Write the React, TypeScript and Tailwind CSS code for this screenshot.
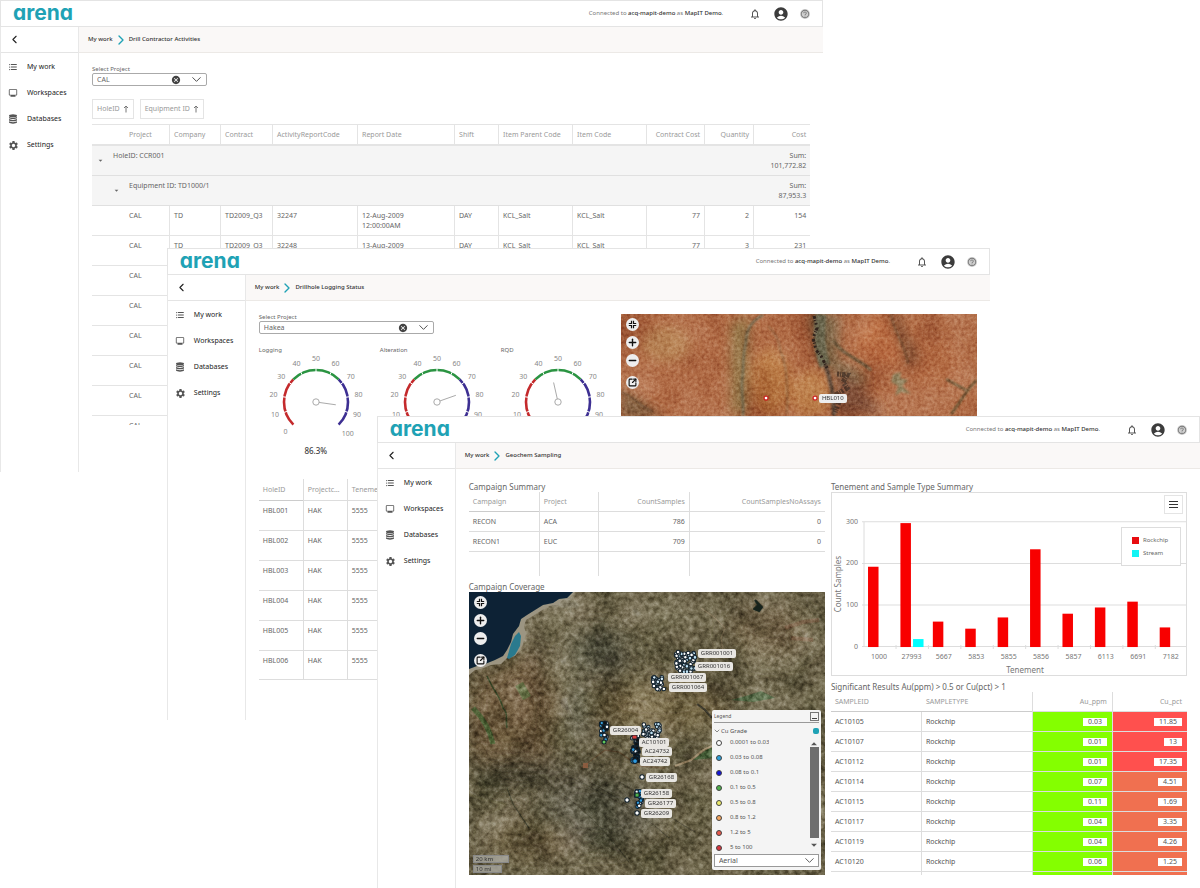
import type { ReactNode } from "react";
import {
  MdAccountCircle,
  MdArrowDropDown,
  MdArrowDropUp,
  MdCancel,
  MdFormatListBulleted,
  MdHelpOutline,
  MdNotificationsNone,
  MdOutlineMonitor,
  MdSettings,
} from "react-icons/md";
import { ChevronDown, ChevronLeft, ChevronRight, Minus, Plus, SquareArrowOutUpRight } from "lucide-react";

function DatabaseIcon() {
  return (
    <svg width="10" height="10" viewBox="0 0 10 10" fill="currentColor">
      <ellipse cx="5" cy="1.7" rx="4" ry="1.5" />
      <path d="M1 2.9C2 4 8 4 9 2.9V4.2C8 5.3 2 5.3 1 4.2Z" />
      <path d="M1 5.1C2 6.2 8 6.2 9 5.1V6.4C8 7.5 2 7.5 1 6.4Z" />
      <path d="M1 7.3C2 8.4 8 8.4 9 7.3V8.6C8 10 2 10 1 8.6Z" />
    </svg>
  );
}

const navItems = [
  { label: "My work", icon: <MdFormatListBulleted size={10} /> },
  { label: "Workspaces", icon: <MdOutlineMonitor size={10} /> },
  { label: "Databases", icon: <DatabaseIcon /> },
  { label: "Settings", icon: <MdSettings size={11} /> },
];

function AppWindow({ title, className, children }: { title: string; className: string; children: ReactNode }) {
  return (
    <section className={`isolate flex min-h-[472px] flex-col bg-white [grid-area:1/1] ${className}`}>
      <header className="flex h-[27px] items-center justify-between border border-[#e4e4e4] px-3">
        <a
          href="#"
          className="pb-0.5 font-['Inter',sans-serif] text-[21px] leading-6 font-bold text-[#1fa2b5] [font-feature-settings:'cv11']"
        >
          arena
        </a>
        <div className="flex items-center">
          <p className="mr-[26px] text-[6px] text-[#777]">
            Connected to <span className="font-medium text-[#333]">acq-mapit-demo</span> as{" "}
            <span className="font-medium text-[#333]">MapIT Demo</span>.
          </p>
          <button aria-label="Notifications" className="mr-3 text-[#555]">
            <MdNotificationsNone size={12} />
          </button>
          <button aria-label="Account" className="mr-[11px] text-[#3c3c3c]">
            <MdAccountCircle size={16} />
          </button>
          <button aria-label="Help" className="rounded-full bg-[#d0d0d0] text-[#777]">
            <MdHelpOutline size={10} />
          </button>
        </div>
      </header>

      <div className="flex flex-1">
        <aside className="w-[79px] shrink-0 border-x border-[#e8e8e8]">
          <div className="flex h-[26px] items-center border-b border-[#e4e4e4] pl-[7px]">
            <button aria-label="Collapse menu">
              <ChevronLeft size={13} className="text-[#222]" />
            </button>
          </div>
          <nav className="pt-px">
            {navItems.map((item) => (
              <a key={item.label} href="#" className="flex h-[26px] items-center pl-[7px] text-[7px] text-[#222]">
                <span className="flex w-[19px] text-[#555]">{item.icon}</span>
                {item.label}
              </a>
            ))}
          </nav>
        </aside>

        <div className="min-w-0 flex-1">
          <div className="flex h-[26px] items-center border-b border-[#ece9e6] bg-[#faf8f7] pl-[9px] text-[6px] font-medium text-[#333]">
            <a href="#">My work</a>
            <ChevronRight size={16} className="text-[#1fa2b5]" />
            <span>{title}</span>
          </div>
          <main className="px-[13px]">{children}</main>
        </div>
      </div>
    </section>
  );
}

function ProjectSelect({ id, value, className }: { id: string; value: string; className: string }) {
  return (
    <div className={className}>
      <label htmlFor={id} className="block text-[6px] leading-[7px] text-[#666]">
        Select Project
      </label>
      <div className="relative">
        <select
          id={id}
          defaultValue={value}
          className="block h-[13px] w-full appearance-none rounded-xs border border-[#aaa] bg-white pl-1 text-[7px] leading-[11px] text-[#666]"
        >
          <option>{value}</option>
        </select>
        <button aria-label="Clear" className="absolute top-[2px] right-[26px] text-[#444]">
          <MdCancel size={10} />
        </button>
        <ChevronDown
          size={15}
          strokeWidth={1.5}
          className="pointer-events-none absolute -top-px right-[3px] text-[#444]"
        />
      </div>
    </div>
  );
}

/* ---------- Drill Contractor Activities ---------- */

const activityColumns = [
  { name: "Project", width: "w-[77px]" },
  { name: "Company", width: "w-[51px]" },
  { name: "Contract", width: "w-[52px]" },
  { name: "ActivityReportCode", width: "w-[85px]" },
  { name: "Report Date", width: "w-[97px]" },
  { name: "Shift", width: "w-[44px]" },
  { name: "Item Parent Code", width: "w-[74px]" },
  { name: "Item Code", width: "w-[74px]" },
  { name: "Contract Cost", width: "w-[58px]" },
  { name: "Quantity", width: "w-[49px]" },
  { name: "Cost", width: "w-[57px]" },
];

const activities = [12, 13, 14, 15, 16, 17, 18, 19].map((day, i) => [
  "CAL",
  "TD",
  "TD2009_Q3",
  String(32247 + i),
  `${day}-Aug-2009 12:00:00AM`,
  "DAY",
  "KCL_Salt",
  "KCL_Salt",
  "77",
  String(2 + i),
  String(77 * (2 + i)),
]);

function activityCell(i: number) {
  if (i === 0) return "pl-[37px]";
  if (i === 4) return "pl-1 pr-10 border-l";
  if (i > 7) return "pr-1 text-right border-l";
  return "pl-1 border-l";
}

function SortArrow() {
  return (
    <svg width="6" height="8" viewBox="0 0 6 8" fill="none" stroke="#777">
      <path d="M3 7.5V1M1 3L3 1L5 3" />
    </svg>
  );
}

function ContractorActivities() {
  return (
    <div className="pt-[13px]">
      <ProjectSelect id="project-cal" value="CAL" className="w-[115px]" />
      <div className="mt-[13px] flex gap-[6px] text-[7px] text-[#999]">
        <button className="flex h-5 items-center gap-[3px] border border-[#e4e4e4] px-1">
          HoleID <SortArrow />
        </button>
        <button className="flex h-5 items-center gap-[3px] border border-[#e4e4e4] px-1">
          Equipment ID <SortArrow />
        </button>
      </div>
      <div className="mt-[5px] h-[301px] overflow-hidden border-t border-[#e4e4e4]">
        <table className="w-full table-fixed border-separate border-spacing-0 text-[7px] leading-[10px] text-[#666]">
          <thead>
            <tr className="h-[21px] text-[#999]">
              {activityColumns.map((col, i) => (
                <th
                  key={col.name}
                  className={`border-b-2 border-[#e4e4e4] font-normal whitespace-nowrap ${col.width} ${i > 7 ? "text-right" : "text-left"} ${i === 4 ? "border-l pl-1" : activityCell(i)}`}
                >
                  {col.name}
                </th>
              ))}
            </tr>
          </thead>
          <tbody>
            <tr className="h-[30px] bg-[#f5f5f5] align-top">
              <td colSpan={10} className="border-b border-[#e0e0e0] pt-[5px]">
                <button className="flex items-start gap-2 pl-1">
                  <MdArrowDropDown size={9} className="mt-[5px]" /> HoleID: CCR001
                </button>
              </td>
              <td className="border-b border-[#e0e0e0] pt-[5px] pr-1 text-right">
                Sum:
                <br />
                101,772.82
              </td>
            </tr>
            <tr className="h-[30px] bg-[#f5f5f5] align-top">
              <td colSpan={10} className="border-b border-[#e0e0e0] pt-[5px]">
                <button className="flex items-start gap-2 pl-5">
                  <MdArrowDropDown size={9} className="mt-[5px]" /> Equipment ID: TD1000/1
                </button>
              </td>
              <td className="border-b border-[#e0e0e0] pt-[5px] pr-1 text-right">
                Sum:
                <br />
                87,953.3
              </td>
            </tr>
            {activities.map((row) => (
              <tr key={row[3]} className="h-[30px] align-top">
                {row.map((value, i) => (
                  <td key={i} className={`border-b border-[#e4e4e4] pt-[5px] ${activityCell(i)}`}>
                    {value}
                  </td>
                ))}
              </tr>
            ))}
          </tbody>
        </table>
      </div>
    </div>
  );
}

/* ---------- Drillhole Logging Status ---------- */

function polar(value: number, radius: number) {
  const angle = ((value / 100) * 270 - 135) * (Math.PI / 180);
  return { x: 57 + radius * Math.sin(angle), y: 47 - radius * Math.cos(angle) };
}

function arc(from: number, to: number) {
  const a = polar(from, 32);
  const b = polar(to, 32);
  return `M${a.x} ${a.y}A32 32 0 0 1 ${b.x} ${b.y}`;
}

const ticks = [0, 10, 20, 30, 40, 50, 60, 70, 80, 90, 100];

function Gauge({ label, value }: { label: string; value: number }) {
  const from = polar(value, 3);
  const to = polar(value, 20);
  return (
    <figure className="w-[121px] shrink-0">
      <figcaption className="text-[6px] leading-[9px] text-[#666]">{label}</figcaption>
      <svg width="114" height="90" viewBox="0 0 114 90" fill="none" strokeWidth="2.6">
        <path d={arc(0, 33.3)} stroke="#c42a2c" />
        <path d={arc(33.3, 66.7)} stroke="#2b9442" />
        <path d={arc(66.7, 100)} stroke="#3d2f92" />
        {ticks.slice(1, 10).map((t) => {
          const a = polar(t, 30);
          const b = polar(t, 34);
          return <line key={t} x1={a.x} y1={a.y} x2={b.x} y2={b.y} stroke="#fff" strokeWidth="1" />;
        })}
        {ticks.map((t) => {
          const p = polar(t, t === 100 ? 45 : 43);
          return (
            <text key={t} x={p.x} y={p.y + 2} textAnchor="middle" fontSize="7" fill="#888">
              {t}
            </text>
          );
        })}
        <circle cx="57" cy="47" r="3.2" stroke="#aaa" strokeWidth="1" />
        <line x1={from.x} y1={from.y} x2={to.x} y2={to.y} stroke="#aaa" strokeWidth="1" />
      </svg>
      <p className="w-[114px] text-center text-[8px] leading-3 font-medium text-[#444]">{value}%</p>
    </figure>
  );
}

function MapControls() {
  const button = "flex size-[13px] items-center justify-center rounded-full bg-[#eee] text-[#111]";
  return (
    <div className="absolute top-1 left-[5px] flex flex-col gap-[5px]">
      <button aria-label="Zoom to extent" className={button}>
        <svg width="9" height="9" viewBox="0 0 9 9" fill="none" stroke="currentColor" strokeWidth="1.2">
          <path d="M3.5 .8V3.5H.8M5.5 .8V3.5H8.2M3.5 8.2V5.5H.8M5.5 8.2V5.5H8.2" />
        </svg>
      </button>
      <button aria-label="Zoom in" className={button}>
        <Plus size={11} strokeWidth={3} />
      </button>
      <button aria-label="Zoom out" className={button}>
        <Minus size={11} strokeWidth={3} />
      </button>
      <button aria-label="Open map in new window" className={`mt-1 ${button}`}>
        <SquareArrowOutUpRight size={9} strokeWidth={3} />
      </button>
    </div>
  );
}

function DesertImagery() {
  return (
    <svg className="absolute inset-0 size-full" viewBox="0 0 356 283" preserveAspectRatio="xMinYMin slice">
      <defs>
        <filter id="sand" x="0" y="0" width="100%" height="100%" colorInterpolationFilters="sRGB">
          <feTurbulence type="fractalNoise" baseFrequency="0.3" numOctaves="4" seed="4" />
          <feColorMatrix values="1 0 0 0 0  1 0 0 0 0  1 0 0 0 0  0 0 0 0 1" />
        </filter>
        <filter id="dunes" x="0" y="0" width="100%" height="100%" colorInterpolationFilters="sRGB">
          <feTurbulence type="fractalNoise" baseFrequency="0.025 0.018" numOctaves="3" seed="9" />
          <feColorMatrix values="1.6 0 0 0 -0.3  1.6 0 0 0 -0.3  1.6 0 0 0 -0.3  0 0 0 0 1" />
        </filter>
        <filter id="soft" x="-20%" y="-20%" width="140%" height="140%">
          <feGaussianBlur stdDeviation="6" />
        </filter>
        <filter id="softer">
          <feGaussianBlur stdDeviation="0.8" />
        </filter>
      </defs>
      <rect width="356" height="283" fill="#b06b45" />
      <g filter="url(#soft)">
        <ellipse cx="45" cy="30" rx="24" ry="18" fill="#b98557" />
        <ellipse cx="150" cy="68" rx="20" ry="34" fill="#bd7f4a" />
        <ellipse cx="190" cy="80" rx="20" ry="24" fill="#bd804b" />
        <ellipse cx="265" cy="26" rx="30" ry="24" fill="#bf7548" />
        <ellipse cx="315" cy="50" rx="26" ry="24" fill="#b26a42" />
        <path d="M110 10L128 0L126 100L110 100Z" fill="#977a4c" />
        <path d="M188 0L218 0L216 45L246 62L240 74L200 50Z" fill="#775e3f" />
        <path d="M268 0L278 0L298 45L288 54Z" fill="#85573a" />
        <path d="M0 74L44 104L0 104Z" fill="#7c5a3b" />
        <path d="M212 60L236 66L262 100L216 100Z" fill="#7b4a33" />
      </g>
      <rect width="356" height="283" filter="url(#dunes)" className="opacity-40 mix-blend-soft-light" />
      <g fill="none" filter="url(#softer)">
        <path d="M142 1C132 6 125 14 125 28C121 42 123 54 121 66C120 80 123 90 122 102" stroke="#706b52" strokeWidth="2" />
        <path d="M147 12C153 18 158 24 159 36C165 48 167 64 166 100" stroke="#7e5c3c" strokeWidth="1" />
        <path d="M200 0C197 22 199 38 204 52" stroke="#6b664e" strokeWidth="11" />
        <path d="M204 50C210 66 213 82 213 102" stroke="#5e4a3a" strokeWidth="4" />
        <path d="M212 26C220 40 236 44 250 56" stroke="#69563a" strokeWidth="3" />
        <path d="M270 0C272 18 284 28 287 50" stroke="#5c4630" strokeWidth="1" />
        <path d="M325 65L345 76M356 66C346 74 340 88 330 100" stroke="#5c5030" strokeWidth="2" />
        <path d="M0 78C12 82 18 92 32 98" stroke="#5a432c" strokeWidth="1" />
        <path d="M272 60L280 58L279 64L287 66L281 72L290 80L280 78L274 82L277 72L270 68Z" fill="#93835f" />
      </g>
      <rect width="356" height="283" filter="url(#sand)" className="opacity-60 mix-blend-soft-light" />
      <g fill="none" stroke="#30231c">
        <path d="M193 2L196 14L192 24L195 36L200 42L206 54" strokeWidth="3" strokeDasharray="3 1 1 2 2 3" />
        <path d="M216 60L226 61L222 68L226 74L216 80L218 88L214 98" strokeWidth="5" strokeDasharray="2 1 1 1 3 2" opacity=".6" />
      </g>
      <g fill="#fff" stroke="#c22" strokeWidth="1.2">
        <circle cx="145" cy="84" r="2" />
        <circle cx="194" cy="84" r="2" />
      </g>
    </svg>
  );
}

const holes = ["HBL001", "HBL002", "HBL003", "HBL004", "HBL005", "HBL006"];

function LoggingStatus() {
  return (
    <div className="grid grid-cols-2 gap-[6px] pt-[13px]">
      <div className="min-w-0">
        <ProjectSelect id="project-hakea" value="Hakea" className="w-[175px]" />
        <div className="mt-3 flex">
          <Gauge label="Logging" value={86.3} />
          <Gauge label="Alteration" value={76.1} />
          <Gauge label="RQD" value={45.3} />
        </div>
        <div className="mt-[22px] h-[201px] overflow-hidden border-b border-[#ddd]">
          <table className="w-full table-fixed border-separate border-spacing-0 text-left text-[7px] leading-[10px] text-[#666]">
            <thead>
              <tr className="h-[22px] text-[#999]">
                <th className="w-[44px] border-b border-[#ccc] pl-1 font-normal">HoleID</th>
                <th className="w-[44px] truncate border-b border-l border-[#ddd] px-1 font-normal">Projectcode</th>
                <th className="border-b border-l border-[#ddd] pl-1 font-normal">Tenement</th>
              </tr>
            </thead>
            <tbody>
              {holes.map((hole) => (
                <tr key={hole} className="h-[30px] align-top">
                  <td className="border-b border-[#ddd] pt-[5px] pl-1">{hole}</td>
                  <td className="border-b border-l border-[#ddd] pt-[5px] pl-1">HAK</td>
                  <td className="border-b border-l border-[#ddd] pt-[5px] pl-1">5555</td>
                </tr>
              ))}
            </tbody>
          </table>
        </div>
      </div>
      <div className="relative isolate h-[283px] overflow-hidden">
        <DesertImagery />
        <MapControls />
        <span className="absolute top-20 left-[198px] rounded-xs bg-[#eee] px-[3px] text-[6px] leading-[9px] text-[#333]">
          HBL010
        </span>
      </div>
    </div>
  );
}

/* ---------- Geochem Sampling ---------- */

const mapLabels = [
  { text: "GRR001001", x: 229, y: 57 },
  { text: "GRR001016", x: 226, y: 70 },
  { text: "GRR001067", x: 199, y: 81 },
  { text: "GRR001064", x: 200, y: 91 },
  { text: "GR26004", x: 141, y: 134 },
  { text: "AC10101", x: 170, y: 146 },
  { text: "AC24732", x: 173, y: 155 },
  { text: "AC24742", x: 171, y: 165 },
  { text: "GR26168", x: 177, y: 181 },
  { text: "GR26158", x: 172, y: 197 },
  { text: "GR26177", x: 176, y: 207 },
  { text: "GR26209", x: 172, y: 217 },
];

const clusters = [
  { x: 207, y: 60, w: 19, h: 20, n: 70, colors: ["#fff", "#fff", "#bfe3f5"] },
  { x: 183, y: 85, w: 12, h: 13, n: 30, colors: ["#fff", "#d6eefa"] },
  { x: 132, y: 130, w: 6, h: 18, n: 30, colors: ["#111", "#fff", "#3a9fd8"] },
  { x: 174, y: 132, w: 17, h: 14, n: 44, colors: ["#fff", "#bfe3f5", "#fff"] },
  { x: 163, y: 144, w: 7, h: 26, n: 40, colors: ["#111", "#fff", "#2f9be0", "#111"] },
  { x: 167, y: 195, w: 4, h: 12, n: 12, colors: ["#2f9be0", "#fff", "#2f9be0"] },
  { x: 168, y: 206, w: 6, h: 9, n: 10, colors: ["#fff", "#2f9be0"] },
];

function noise(n: number) {
  const v = Math.sin(n * 12.9898) * 43758.5453;
  return v - Math.floor(v);
}

function scatter(index: number) {
  const c = clusters[index];
  return Array.from({ length: c.n }, (_, i) => ({
    x: c.x + noise(i * 2 + index * 31 + 1) * c.w,
    y: c.y + noise(i * 2 + index * 31 + 2) * c.h,
    fill: c.colors[i % c.colors.length],
  }));
}

function CoastImagery() {
  return (
    <svg className="absolute inset-0 size-full" viewBox="0 0 356 283" preserveAspectRatio="xMinYMin slice">
      <defs>
        <filter id="scrub" x="0" y="0" width="100%" height="100%" colorInterpolationFilters="sRGB">
          <feTurbulence type="fractalNoise" baseFrequency="0.2" numOctaves="5" seed="21" />
          <feColorMatrix values="1.2 0 0 0 -0.1  1.2 0 0 0 -0.1  1.2 0 0 0 -0.1  0 0 0 0 1" />
        </filter>
        <filter id="ridges" x="0" y="0" width="100%" height="100%" colorInterpolationFilters="sRGB">
          <feTurbulence type="fractalNoise" baseFrequency="0.025" numOctaves="6" seed="6" />
          <feColorMatrix values="1.8 0 0 0 -0.4  1.7 .1 0 0 -0.4  1.7 0 0 0 -0.4  0 0 0 0 1" />
        </filter>
        <filter id="haze" x="-20%" y="-20%" width="140%" height="140%">
          <feGaussianBlur stdDeviation="10" />
        </filter>
        <filter id="edge">
          <feGaussianBlur stdDeviation="0.7" />
        </filter>
      </defs>
      <rect width="356" height="283" fill="#6b634b" />
      <g filter="url(#haze)">
        <path d="M0 90L60 60L90 100L80 170L20 180L0 160Z" fill="#715d42" />
        <ellipse cx="130" cy="60" rx="30" ry="22" fill="#605d4e" />
        <ellipse cx="60" cy="180" rx="60" ry="16" fill="#4f4a38" />
        <ellipse cx="190" cy="115" rx="70" ry="26" fill="#76684a" />
        <ellipse cx="300" cy="40" rx="40" ry="26" fill="#716249" />
        <ellipse cx="110" cy="120" rx="14" ry="30" fill="#575542" />
        <ellipse cx="130" cy="220" rx="60" ry="36" fill="#585445" />
        <ellipse cx="60" cy="250" rx="40" ry="20" fill="#726548" />
      </g>
      <g filter="url(#edge)" fill="none">
        <path d="M4 116C12 124 20 134 24 152" stroke="#4b5f36" strokeWidth="5" />
        <path d="M50 92L58 106" stroke="#5d6a40" strokeWidth="9" />
        <path d="M18 84C24 98 32 106 34 116C40 122 36 128 38 136" stroke="#3b4a2c" strokeWidth="1.5" />
        <path d="M262 108L280 103L292 99L306 106L284 110Z" fill="#4c6040" />
        <path d="M224 168L240 156L250 154L254 165Z" fill="#46603a" />
        <path d="M206 174L222 168L234 158L250 151" stroke="#a9977b" strokeWidth="2" />
        <path d="M196 176L170 174L150 160L136 158L112 176" stroke="#645037" strokeWidth="1.2" />
        <path d="M228 112L236 118L243 126" stroke="#37342a" strokeWidth="2" />
        <path d="M232 16L246 26L256 36L252 46L254 60" stroke="#83755c" strokeWidth="1.2" />
        <path d="M316 36L334 30L350 28M322 46L344 48" stroke="#704c38" strokeWidth="4" opacity=".5" />
        <path d="M38 196L44 212L52 224L60 236" stroke="#3b3b2a" strokeWidth="1.2" />
        <path d="M96 184C120 192 140 206 170 222M120 190C150 206 170 220 200 246M90 200C120 220 140 244 160 270M150 190C180 206 190 220 226 240" stroke="#403c30" strokeWidth=".8" />
      </g>
      <rect width="356" height="283" filter="url(#ridges)" className="opacity-50 mix-blend-soft-light" />
      <rect width="356" height="283" filter="url(#scrub)" className="opacity-80 mix-blend-soft-light" />
      <path d="M286 8L289 13L285 17L290 19L293 15Z" fill="#16231c" stroke="#16231c" strokeWidth="2" filter="url(#edge)" />
      <path
        d="M0 83V0H106L101 6L94 8L88 13L80 14L70 20L62 25L57 28L55 34L57 42L54 52L51 58L46 64L38 66L32 72L22 73L12 77L6 78Z"
        fill="#9c9582"
        filter="url(#edge)"
      />
      <path
        d="M0 77V0H104L98 6L90 7L84 11L74 13L66 18L58 23L52 27L50 34L44 42L42 50L38 58L34 64L26 68L16 72L8 74Z"
        fill="#0a2335"
        filter="url(#edge)"
      />
      <path d="M50 40L52 44L51 54L46 63L40 67L38 66L42 52L46 44Z" fill="#2c7a8e" filter="url(#edge)" />
      <path d="M114 171h5v5h-5z" fill="#9a6144" opacity=".8" />
      <g stroke="#10202c" strokeWidth="1">
        {clusters.map((_, i) =>
          scatter(i).map((dot, j) => <circle key={`${i}-${j}`} cx={dot.x} cy={dot.y} r="1.8" fill={dot.fill} />),
        )}
        <rect x="163" y="143" width="5" height="4" fill="#d83a3a" />
        <circle cx="135" cy="150" r="2" fill="#5fc75a" />
        <circle cx="166" cy="169" r="2.4" fill="#2f9be0" />
        <rect x="166" y="201" width="4" height="4" fill="#4fb54a" />
        <circle cx="173" cy="185" r="2.2" fill="#fff" />
        <circle cx="158" cy="208" r="2.2" fill="#fff" />
        <circle cx="168" cy="221" r="2.2" fill="#fff" />
      </g>
    </svg>
  );
}

const grades = [
  { range: "0.0001 to 0.03", color: "bg-white" },
  { range: "0.03 to 0.08", color: "bg-[#2f9fd8]" },
  { range: "0.08 to 0.1", color: "bg-[#1414d8]" },
  { range: "0.1 to 0.5", color: "bg-[#4fae4a]" },
  { range: "0.5 to 0.8", color: "bg-[#ecea6a]" },
  { range: "0.8 to 1.2", color: "bg-[#f2a45e]" },
  { range: "1.2 to 5", color: "bg-[#e8584a]" },
  { range: "5 to 100", color: "bg-[#d8363f]" },
];

function MapLegend() {
  return (
    <div className="absolute right-1 bottom-[5px] w-[109px] rounded-xs bg-[#f4f4f4] px-[2px] py-px text-[6px] text-[#555]">
      <div className="flex h-3 items-center justify-between border-b border-[#999]">
        <span className="text-[5px]">Legend</span>
        <button aria-label="Minimise legend" className="flex size-[9px] items-end justify-center border border-[#777] pb-px">
          <span className="h-px w-[5px] bg-[#444]" />
        </button>
      </div>
      <div className="flex h-4 items-center">
        <ChevronDown size={8} className="-ml-px" /> Cu Grade
        <span className="ml-auto size-[6px] rounded-xs bg-[#1fa2b5]" />
      </div>
      <div className="flex h-[113px] justify-between">
        <ul className="-mt-1 h-[117px] overflow-hidden">
          {grades.map((grade) => (
            <li key={grade.range} className="flex h-[15px] items-center gap-2 pl-[2px]">
              <span className={`size-[6px] rounded-full border border-[#444] ${grade.color}`} />
              {grade.range}
            </li>
          ))}
        </ul>
        <div className="flex w-[9px] flex-col items-center justify-between">
          <MdArrowDropUp size={14} className="-mt-[2px] -mb-[4px] shrink-0" />
          <div className="w-full flex-1 bg-[#6e6e6e]" />
          <MdArrowDropDown size={14} className="shrink-0" />
        </div>
      </div>
      <div className="relative my-[2px]">
        <select
          aria-label="Base layer"
          className="block h-[13px] w-full appearance-none border border-[#999] bg-white pl-1 text-[7px] leading-[11px] text-[#555]"
        >
          <option>Aerial</option>
        </select>
        <ChevronDown size={15} strokeWidth={1.5} className="pointer-events-none absolute -top-px right-0.5" />
      </div>
    </div>
  );
}

const bars = [
  { tenement: "1000", rockchip: 192 },
  { tenement: "27993", rockchip: 297, stream: 18 },
  { tenement: "5667", rockchip: 60 },
  { tenement: "5853", rockchip: 43 },
  { tenement: "5855", rockchip: 70 },
  { tenement: "5856", rockchip: 234 },
  { tenement: "5857", rockchip: 79 },
  { tenement: "6113", rockchip: 94 },
  { tenement: "6691", rockchip: 108 },
  { tenement: "7182", rockchip: 46 },
];

const plotY = (value: number) => 153.5 - value * 0.4155;

function TenementChart() {
  return (
    <div className="relative border border-[#ddd]">
      <svg className="block w-full" viewBox="0 0 354 182" fontSize="7" fill="#777">
        {[0, 100, 200, 300].map((value) => (
          <g key={value}>
            <line x1="30" x2="354" y1={plotY(value)} y2={plotY(value)} stroke="#ddd" />
            <text x="26" y={plotY(value) + 2} textAnchor="end">
              {value}
            </text>
          </g>
        ))}
        <line x1="32" x2="32" y1="29" y2="154" stroke="#ddd" />
        {bars.map((bar, i) => {
          const x = 36 + i * 32.4;
          return (
            <g key={bar.tenement}>
              <rect x={x} y={plotY(bar.rockchip)} width="10.5" height={154 - plotY(bar.rockchip)} fill="#f80000" />
              {bar.stream && (
                <rect x={x + 12.6} y={plotY(bar.stream)} width="10.5" height={154 - plotY(bar.stream)} fill="#0ff" />
              )}
              <text x={x + 11} y="166" textAnchor="middle">
                {bar.tenement}
              </text>
              <line x1={x + 28} x2={x + 28} y1="152" y2="156" stroke="#ddd" />
            </g>
          );
        })}
        <text x="193" y="180" textAnchor="middle" fontSize="8">
          Tenement
        </text>
        <text transform="translate(9 91) rotate(-90)" textAnchor="middle" fontSize="8">
          Count Samples
        </text>
      </svg>
      <button
        aria-label="Chart menu"
        className="absolute top-[2px] right-[3px] flex size-[19px] flex-col items-center justify-center gap-[2px] border border-[#e4e4e4] bg-white"
      >
        <span className="h-px w-[9px] bg-[#333]" />
        <span className="h-px w-[9px] bg-[#333]" />
        <span className="h-px w-[9px] bg-[#333]" />
      </button>
      <ul className="absolute top-[34px] right-[5px] flex h-[39px] w-[60px] flex-col justify-center gap-[3px] border border-[#ddd] bg-white pl-[10px] text-[6px] leading-[10px] text-[#666]">
        <li className="flex items-center gap-1">
          <span className="size-[7px] bg-[#e80c10]" /> Rockchip
        </li>
        <li className="flex items-center gap-1">
          <span className="size-[7px] bg-[#12f4f4]" /> Stream
        </li>
      </ul>
    </div>
  );
}

const results = [
  { id: "AC10105", au: "0.03", cu: "11.85", high: true },
  { id: "AC10107", au: "0.01", cu: "13", high: true },
  { id: "AC10112", au: "0.01", cu: "17.35", high: true },
  { id: "AC10114", au: "0.07", cu: "4.51", high: false },
  { id: "AC10115", au: "0.11", cu: "1.69", high: false },
  { id: "AC10117", au: "0.04", cu: "3.35", high: false },
  { id: "AC10119", au: "0.04", cu: "4.26", high: false },
  { id: "AC10120", au: "0.06", cu: "1.25", high: false },
];

function GeochemSampling() {
  const heading = "text-[8px] leading-[11px] text-[#666]";
  return (
    <div className="grid grid-cols-2 gap-[6px] pt-3 pb-[13px]">
      <div className="min-w-0">
        <h2 className={heading}>Campaign Summary</h2>
        <table className="w-full table-fixed border-separate border-spacing-0 text-left text-[7px] leading-[10px] text-[#666]">
          <thead>
            <tr className="h-5 text-[#999]">
              <th className="w-[70px] border-b border-[#ccc] pl-1 font-normal">Campaign</th>
              <th className="w-[59px] border-b border-l border-[#ddd] pl-1 font-normal">Project</th>
              <th className="w-[91px] border-b border-l border-[#ddd] pr-1 text-right font-normal">CountSamples</th>
              <th className="border-b border-l border-[#ddd] pr-1 text-right font-normal">CountSamplesNoAssays</th>
            </tr>
          </thead>
          <tbody>
            <tr className="h-5">
              <td className="border-b border-[#ddd] pl-1">RECON</td>
              <td className="border-b border-l border-[#ddd] pl-1">ACA</td>
              <td className="border-b border-l border-[#ddd] pr-1 text-right">786</td>
              <td className="border-b border-l border-[#ddd] pr-1 text-right">0</td>
            </tr>
            <tr className="h-5">
              <td className="border-b border-[#ddd] pl-1">RECON1</td>
              <td className="border-b border-l border-[#ddd] pl-1">EUC</td>
              <td className="border-b border-l border-[#ddd] pr-1 text-right">709</td>
              <td className="border-b border-l border-[#ddd] pr-1 text-right">0</td>
            </tr>
            <tr className="h-6">
              <td />
              <td className="border-l border-[#ddd]" />
              <td className="border-l border-[#ddd]" />
              <td className="border-l border-[#ddd]" />
            </tr>
          </tbody>
        </table>
        <h2 className={`mt-[5px] ${heading}`}>Campaign Coverage</h2>
        <div className="relative isolate h-[283px] overflow-hidden">
          <CoastImagery />
          <MapControls />
          {mapLabels.map((label) => (
            <span
              key={label.text}
              className="absolute rounded-xs bg-[#e8e6e2] px-[3px] text-[6px] leading-[9px] text-[#333]"
              style={{ left: label.x, top: label.y }}
            >
              {label.text}
            </span>
          ))}
          <div className="absolute bottom-[2px] left-1 flex flex-col items-start gap-[2px] text-[6px] leading-[6px] text-[#333]">
            <span className="w-9 border border-[#888] bg-[#aaa9a0]/80 pl-[2px]">20 km</span>
            <span className="w-[29px] border border-[#888] bg-[#aaa9a0]/80 pl-[2px]">10 mi</span>
          </div>
          <MapLegend />
        </div>
      </div>

      <div className="min-w-0">
        <h2 className={heading}>Tenement and Sample Type Summary</h2>
        <TenementChart />
        <h2 className={`mt-[5px] ${heading}`}>Significant Results Au(ppm) &gt; 0.5 or Cu(pct) &gt; 1</h2>
        <table className="w-full table-fixed border-separate border-spacing-0 text-left text-[7px] leading-[8px] text-[#555]">
          <thead>
            <tr className="h-5 text-[#999]">
              <th className="w-[90px] border-b border-[#ccc] pl-1 font-normal">SAMPLEID</th>
              <th className="w-[111px] border-b border-[#ccc] pl-[5px] font-normal">SAMPLETYPE</th>
              <th className="w-[80px] border-b border-l border-[#ddd] pr-[5px] text-right font-normal">Au_ppm</th>
              <th className="border-b border-l border-[#ddd] pr-[5px] text-right font-normal">Cu_pct</th>
            </tr>
          </thead>
          <tbody>
            {results.map((row) => (
              <tr key={row.id} className="h-5">
                <td className="border-b border-[#ddd] pl-1">{row.id}</td>
                <td className="border-b border-l border-[#ddd] pl-1">Rockchip</td>
                <td className="border-b border-l border-[#ddd] bg-[#84ff00] pr-[5px] text-right">
                  <span className="inline-block bg-white px-[5px]">{row.au}</span>
                </td>
                <td
                  className={`border-b border-l border-[#ddd] pr-[5px] text-right ${row.high ? "bg-[#ff504e]" : "bg-[#f07050]"}`}
                >
                  <span className="inline-block bg-white px-[5px]">{row.cu}</span>
                </td>
              </tr>
            ))}
            <tr className="h-[3px]">
              <td />
              <td className="border-l border-[#ddd]" />
              <td className="border-l border-[#ddd] bg-[#84ff00]" />
              <td className="border-l border-[#ddd] bg-[#f07050]" />
            </tr>
          </tbody>
        </table>
      </div>
    </div>
  );
}

export default function App() {
  return (
    <div className="grid min-h-screen items-start bg-white font-['Noto_Sans',sans-serif]">
      <AppWindow title="Drill Contractor Activities" className="mr-[31.4%]">
        <ContractorActivities />
      </AppWindow>
      <AppWindow title="Drillhole Logging Status" className="mt-[248px] mr-[17.5%] ml-[13.9%]">
        <LoggingStatus />
      </AppWindow>
      <AppWindow title="Geochem Sampling" className="mt-[416px] ml-[31.4%]">
        <GeochemSampling />
      </AppWindow>
    </div>
  );
}
